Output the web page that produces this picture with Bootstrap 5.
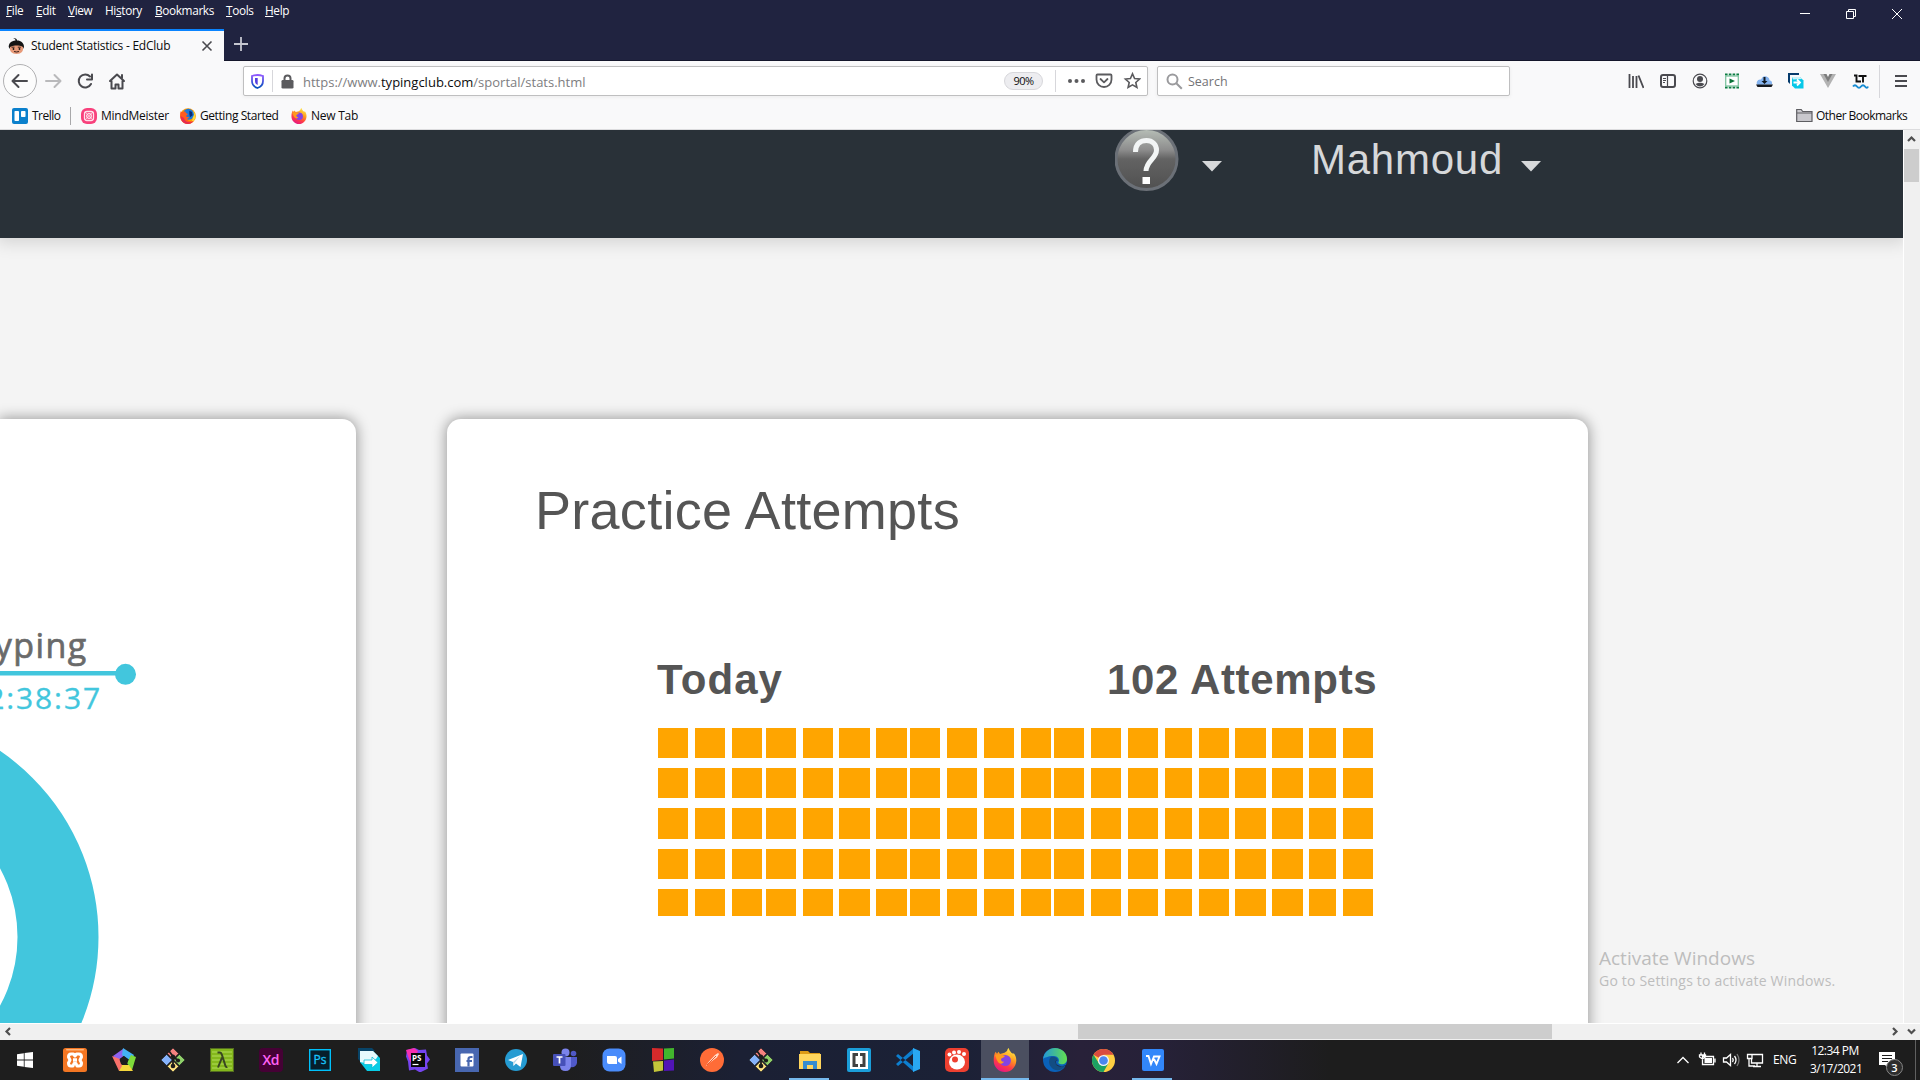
<!DOCTYPE html>
<html lang="en">
<head>
<meta charset="utf-8">
<title>Student Statistics - EdClub</title>
<link href="https://cdn.jsdelivr.net/npm/bootstrap@5.3.0/dist/css/bootstrap.min.css" rel="stylesheet">
<style>
body{width:1920px;height:1080px;overflow:hidden;font-family:"Open Sans","Noto Sans",sans-serif;font-size:12px;line-height:16px;color:#0c0c0d;background:#f9f9fa}
svg{display:block;flex:none}
.titlebar{height:61px;background:#202340}
.menus{height:19px;padding-left:6px;color:#fff}
.menus span{letter-spacing:-.35px;font-size:11.8px;white-space:nowrap}
.menus span::first-letter{text-decoration:underline}
.menus .hist::first-letter{text-decoration:none}
.menus .m1{width:30px}.menus .m2{width:32px}.menus .m3{width:37px}.menus .m4{width:50px}.menus .m5{width:71px}.menus .m6{width:39px}
.tabitem{width:224px;height:32px;background:#f9f9fa;border-top:2px solid #0a84ff;padding-left:8px}
.tabtitle{letter-spacing:-.24px;margin-left:6px;width:170px;white-space:nowrap}
.tabs-rest{border-bottom:1px solid #14162b;height:32px}
.toolbar{height:41px;background:#f9f9fa;padding-bottom:1px}
.navslot{width:32px;display:flex;justify-content:center}
.field{height:30px;background:#fff;border:1px solid #bfbfc0;border-radius:2px;box-shadow:0 1px 4px rgba(0,0,0,.06)}
.urlfield{width:905px;margin-left:110px}
.urltext{font-size:13px;color:#7d7d80;letter-spacing:0;margin-left:9px;padding-top:2px}
.urltext b{font-weight:400;color:#0c0c0d}
.searchtext{font-size:12.5px;color:#737376;margin-left:5px;padding-top:2px}
.zoomlevel{width:39px;height:18px;border:1px solid #d7d7db;border-radius:9px;background:#ededf0;font-size:11px;line-height:16px;text-align:center;letter-spacing:-.5px}
.searchfield{width:353px;margin-left:9px}
.vline{width:1px;background:#d7d7db}
.bookmarks{height:28px;background:#f9f9fa;border-bottom:1px solid #dcdcde;letter-spacing:-.25px;white-space:nowrap}
.bookmarks svg{margin-right:4px}
.viewport{height:910px;background:#f4f4f4}
.webpage{width:1903px;height:893px;overflow:hidden;font-family:"Liberation Sans",Arial,sans-serif;background:#f4f4f4}
.sitebar{height:108px;background:#293138;box-shadow:0 2px 16px 3px rgba(0,0,0,.13);color:#d6d8da}
.username{font-size:42px;line-height:60px;letter-spacing:.75px;width:189px}
.panels{padding-top:181px;gap:91px}
.panelbox{background:#fff;height:700px;box-shadow:0 0 14px 1px rgba(0,0,0,.38)}
.panelleft{width:356px;border-radius:0 14px 0 0}
.panelright{width:1141px;border-radius:14px 14px 0 0;padding:61px 210px 0 88px;color:#555}
.panelright h2{font-size:54px;line-height:60px;font-weight:400;margin:0;white-space:nowrap;letter-spacing:.28px}
.dayhead{margin:116px 0 0 122px;width:719px;height:48px;font-size:42px;line-height:48px;font-weight:700;overflow:hidden;white-space:nowrap}
.dayhead .total{width:269px;letter-spacing:.68px}
.grid-attempts{display:grid;margin:24px 0 0 123px;width:720px;grid-template-columns:37px 37px 34px 37px 36px 37px 34px 37px 37px 37px 33px 37px 37px 37px 34px 36px 37px 37px 34px 30px;grid-template-rows:40px 40px 41px 40px 27px}
.grid-attempts i{background:orange;width:30px;height:30px}
.grid-attempts i:nth-child(20n+6),.grid-attempts i:nth-child(20n+7),.grid-attempts i:nth-child(20n+17),.grid-attempts i:nth-child(20n+18){width:31px}
.grid-attempts i:nth-child(20n+15),.grid-attempts i:nth-child(20n+19){width:27px}
.grid-attempts i:nth-child(n+41):nth-child(-n+60){height:31px}
.grid-attempts i:nth-child(n+81){height:27px}
.vscroll{width:17px;height:893px;background:#f0f0f0;border-left:1px solid #fff}
.hscroll{height:17px;background:#f0f0f0;border-top:1px solid #fff}
.thumb{background:#cdcdcd}
.watermark{left:1599px;top:946px;color:#bdbdbd;white-space:nowrap}
.watermark .w1{font-size:19px;line-height:24px}
.watermark .w2{font-size:14px;line-height:21px;letter-spacing:.2px}
.taskbar{height:40px;padding-left:1px;background:linear-gradient(90deg,#1e1e1e 0,#1e1e1e 560px,#1b2034 740px,#1b2136 960px,#282139 1080px,#262138 1160px,#1d1d1d 1330px);color:#fff}
.app{width:49px;height:40px;display:flex;align-items:center;justify-content:center;position:relative}
.app.start{padding-right:2px}
.app.open::after{content:"";position:absolute;left:4px;right:5px;bottom:0;height:2px;background:#76b9ed}
.app.active{background:linear-gradient(#4b4f60,#4b4f60) 0 0/48px 100% no-repeat}
.app.active::after{left:0;right:1px}
svg text{font-family:"Open Sans","Noto Sans",sans-serif}
</style>
<script src="https://cdn.jsdelivr.net/npm/bootstrap@5.3.0/dist/js/bootstrap.bundle.min.js"></script>
</head>
<body>
<svg width="0" height="0" class="position-absolute"><defs>
<linearGradient id="ffo" x1="0.8" y1="0" x2="0.3" y2="1"><stop offset="0" stop-color="#fff44f"/><stop offset=".4" stop-color="#ff9a1f"/><stop offset=".7" stop-color="#ff3b47"/><stop offset="1" stop-color="#e31587"/></linearGradient>
<linearGradient id="helpg" x1="0" y1="0" x2="0" y2="1"><stop offset="0" stop-color="#b8c0b8"/><stop offset=".35" stop-color="#8d8d8d"/><stop offset=".5" stop-color="#636363"/><stop offset="1" stop-color="#505050"/></linearGradient>
<linearGradient id="shg" x1="0" y1="0" x2="0" y2="1"><stop offset="0" stop-color="#9059ff"/><stop offset="1" stop-color="#0250bb"/></linearGradient>
<linearGradient id="edg" x1="0" y1="0" x2="1" y2="0"><stop offset="0" stop-color="#2297d8"/><stop offset="1" stop-color="#63e04e"/></linearGradient>
<symbol id="git" viewBox="0 0 24 24"><g stroke="#1c1c1c" stroke-width=".6"><path d="M12 0l5.600 5.600L12 11.200 6.400 5.600z" fill="#f5827f"/><path d="M18.400 6.400L24 12l-5.600 5.600L12.800 12z" fill="#8fd06a"/><path d="M5.600 6.400L11.200 12l-5.600 5.600L0 12z" fill="#86b3fb"/><path d="M12 12.800l5.600 5.600L12 24l-5.600-5.600z" fill="#fbe07f"/></g><g stroke="#1c1c1c" stroke-width="1.800" fill="none"><path d="M8 3l4 5.500V18M12 8.500l5 4"/></g><g fill="#1c1c1c"><circle cx="12" cy="8.500" r="2.100"/><circle cx="17" cy="12.500" r="2.100"/><circle cx="12" cy="18" r="2.300"/></g></symbol>
<symbol id="fox" viewBox="0 0 24 24"><path d="M14 3c.3-1.500 1-2.600 1.800-3 .3 2.300 1.500 3.300 2.800 4.900 1 .4 1.800.7 2.400.5 1.500 2 2.400 4.500 2.300 7.300C23 19 18.200 24 12 24S.7 19 .7 12.700C.7 9.500 1 6 2.700 3.800L4 5.800l1.500-2L7 6l4.500-1.200z" fill="url(#ffo)"/><circle cx="12.300" cy="12.500" r="5.600" fill="#8443e4"/><path d="M2 7c3-1 6 0 10 1-1 2-3 1.500-4 3 0 2 1 3 3 2.500-1 2.500-4 3-6 .5C3.500 12 3 9 2 7z" fill="#ff9a1e"/><path d="M12 6.500c3.500-.5 6 2 6.500 5 .5-5-3-7-6.500-5z" fill="#ffbd2f"/></symbol>
<symbol id="oldfox" viewBox="0 0 24 24"><circle cx="12" cy="12" r="11.800" fill="#ff9a00"/><path d="M19 4c4 3 5 9 3 13-2 5-8 7-12 6.500 6 0 9-4 9-9z" fill="#ffd83a"/><circle cx="12.500" cy="9.500" r="8.300" fill="#1b78d6"/><path d="M14 4l4 2 1 5-4 3-1-5z" fill="#0b2a72"/><path d="M1 5C-1 12 0 22 10 24c4 0 8-1 10-5-6 2-9 0-9-3l3-2c-2-1-4 0-5-2l3-3C9 8 8 7 8 5 5 6 2 7 1 5z" fill="#ff5b1c"/><path d="M1 12c0 8 5 12 11 12 3 0 6-1 8-4-6 3-13 1-14-5z" fill="#e52b50"/></symbol>
</defs></svg>

<header class="titlebar d-flex flex-column">
 <div class="d-flex justify-content-between" style="height:29px">
  <nav class="menus d-flex align-items-center"><span class="m1">File</span><span class="m2">Edit</span><span class="m3">View</span><span class="m4 hist">Hi<u>s</u>tory</span><span class="m5">Bookmarks</span><span class="m6">Tools</span><span>Help</span></nav>
  <svg width="138" height="29" viewBox="0 0 138 29" stroke="#fff" fill="none" stroke-width="1"><path d="M18 13.500h10M64.500 11.500h7v7h-7zM66.500 11v-1.500h7v7H72M110 9l10 10M120 9l-10 10"/></svg>
 </div>
 <div class="d-flex">
  <div class="tabitem d-flex align-items-center">
   <svg width="17" height="17" viewBox="0 0 17 17"><path d="M5 0c3 .3 4 1 4 2.500 4 0 7 2.500 7 6.500l-1 2H2L.7 9C1 5 3 3 7.500 2.500 7.500 1 6.500.6 5 0z" fill="#141414"/><path d="M2 9q3-2 6.500-1.500Q13 7 15 9q1 7-6.500 7Q1 16 2 9z" fill="#e79a79"/><path d="M3.500 9.200h3M9.800 9.200h3M6 13.500q2.500 1 5 0" stroke="#38201b" stroke-width="1" fill="none"/><circle cx="5.500" cy="11" r=".9" fill="#191919"/><circle cx="11.500" cy="11" r=".9" fill="#191919"/></svg>
   <span class="tabtitle">Student Statistics - EdClub</span>
   <svg width="12" height="12" viewBox="0 0 12 12" stroke="#4a4a4f" stroke-width="1.600"><path d="M1.500 1.500l9 9M10.500 1.500l-9 9"/></svg>
  </div>
  <div class="tabs-rest flex-grow-1 d-flex align-items-center"><svg class="ms-2" width="17" height="17" viewBox="0 0 17 17" stroke="#c5c6d0" stroke-width="1.800"><path d="M9 1v14M2 8h14"/></svg></div>
 </div>
</header>

<div class="toolbar d-flex align-items-center">
 <svg width="133" height="40" viewBox="0 0 133 40" fill="none" stroke="#4a4a4f" stroke-width="2" stroke-linecap="round" stroke-linejoin="round"><circle cx="20" cy="20" r="16.500" fill="#fcfcfc" stroke="#b1b1b3" stroke-width="1"/><path d="M27 20H13M18.500 14L12.500 20l6 6"/><path d="M46 20h14M54.500 14l6 6-6 6" stroke="#b9b9bb"/><path d="M90 15.500A6.500 6.500 0 1 0 91 23M92 13.500v5h-5"/><path d="M110 20l7-6.500 7 6.500M111.500 20v7.500h4v-4h3v4h4V20M122 14v3"/></svg>
 <div class="field urlfield d-flex align-items-center">
  <svg style="margin-left:7px" width="13" height="15" viewBox="0 0 13 15"><path d="M6.500 1C9 1 10.500 1.500 12 2v5c0 4-2.500 6-5.500 7C3.500 13 1 11 1 7V2c1.500-.5 3-1 5.500-1z" fill="#fff" stroke="url(#shg)" stroke-width="1.800"/><path d="M6.700 4H4v3c0 2 .8 3.300 2.700 4z" fill="#5540df"/></svg>
  <span class="vline" style="height:22px;margin-left:8px"></span>
  <svg style="margin-left:8px" width="13" height="15" viewBox="0 0 13 15"><path d="M3.500 7V4.500a3 3 0 0 1 6 0V7" fill="none" stroke="#5b5b5e" stroke-width="2"/><rect x=".5" y="6" width="12" height="8.500" rx="1.300" fill="#5b5b5e"/></svg>
  <span class="urltext">https://www.<b>typingclub.com</b>/sportal/stats.html</span>
  <span class="zoomlevel ms-auto">90%</span>
  <span class="vline" style="height:22px;margin-left:12px"></span>
  <svg style="margin-left:12px;margin-right:6px" width="73" height="18" viewBox="0 0 73 18" fill="none" stroke="#5b5b5e" stroke-width="1.800"><g fill="#5b5b5e" stroke="none"><circle cx="2" cy="9" r="2"/><circle cx="8.500" cy="9" r="2"/><circle cx="15" cy="9" r="2"/></g><path d="M29.500 2.500h13q1 0 1 1v4a7.500 7.500 0 0 1-15 0v-4q0-1 1-1zM32.500 7l3.500 3.300L39.500 7" stroke-linejoin="round" stroke-linecap="round"/><path d="M64.500 1.800l2.100 4.700 5 .5-3.800 3.500 1.100 5-4.400-2.600-4.400 2.600 1.100-5L57.400 7l5-.5z" stroke-width="1.600"/></svg>
 </div>
 <div class="field searchfield d-flex align-items-center">
  <svg style="margin-left:8px" width="17" height="17" viewBox="0 0 17 17" fill="none" stroke="#9a9a9d" stroke-width="2"><circle cx="6.500" cy="6.500" r="5"/><path d="M10.300 10.300l5.500 5.500"/></svg>
  <span class="searchtext">Search</span>
 </div>
 <div class="d-flex align-items-center ms-auto">
  <span class="navslot"><svg width="16" height="16" viewBox="0 0 16 16" stroke="#4a4a4f" stroke-width="1.800"><path d="M1.500 1v14M5 3v12M8.500 3v12M10.500 2.500l5 12.500"/></svg></span>
  <span class="navslot"><svg width="16" height="16" viewBox="0 0 16 16" fill="none" stroke="#4a4a4f"><rect x="1" y="2" width="14" height="12" rx="2" stroke-width="2"/><path d="M7.500 2v12" stroke-width="1.200"/><path d="M3 5.500h3M3 7.500h3M3 9.500h2"/></svg></span>
  <span class="navslot"><svg width="16" height="16" viewBox="0 0 16 16"><circle cx="8" cy="8" r="6.800" fill="none" stroke="#4a4a4f" stroke-width="1.200"/><circle cx="8" cy="6" r="3" fill="#4a4a4f"/><path d="M3.500 11Q8 8.500 12.500 11 8 16 3.500 11z" fill="#4a4a4f"/></svg></span>
  <span class="navslot"><svg width="16" height="16" viewBox="0 0 16 16"><path d="M1 1.500h14M1 14.500h14" stroke="#0d7d42" stroke-width="2.200" stroke-dasharray="2.600 1.200"/><rect x="1.700" y="3" width="12.600" height="10" fill="#fff" stroke="#7fc4a0" stroke-width="1.300"/><path d="M5.500 5.500L11 8l-5.500 2.500z" fill="#0b7238"/></svg></span>
  <span class="navslot"><svg width="17" height="14" viewBox="0 0 17 14"><path d="M2 11Q0 10 1 7.500t4-2q2-4.500 5.500-3 3 1 3 4 3 0 2.500 4z" fill="#85b4f0"/><path d="M0 10.500h17L15.500 13h-14z" fill="#15191f"/><path d="M8.500 3v5" stroke="#101820" stroke-width="2"/><path d="M5.500 7h6l-3 3z" fill="#101820"/></svg></span>
  <span class="navslot"><svg width="16" height="16" viewBox="0 0 16 16"><path d="M0 0h11v2H2v9L0 9z" fill="#063b6c"/><path d="M4 4h8l3.500 3.500v8H7L4 12.500z" fill="#08c8e8"/><path d="M4 4h8l2 2-9 .5z" fill="#c9f3fa"/><path d="M5.500 9.500H12M9 6.500l3 3-3 3" fill="none" stroke="#fff" stroke-width="1.800"/></svg></span>
  <span class="navslot"><svg width="16" height="16" viewBox="0 0 16 16"><path d="M0 1h4l4 7 4-7h4L8 15z" fill="#b3b3b3"/><path d="M3.500 1h3L8 4l1.500-3h3L8 9z" fill="#7d7d7d"/></svg></span>
  <span class="navslot"><svg width="17" height="16" viewBox="0 0 17 16"><path d="M2 2.500h2.500v6H9M6.500 3h8M11 3v6.500" fill="none" stroke="#111" stroke-width="1.900"/><path d="M1 13.500q2-2.500 4 0t4 0 4 0 3 0" fill="none" stroke="#168bd2" stroke-width="2"/></svg></span>
  <span class="vline" style="height:33px;margin-left:3px"></span>
  <svg style="margin:0 13px 0 15px" width="12" height="14" viewBox="0 0 12 14" stroke="#4a4a4f" stroke-width="2"><path d="M0 2h12M0 7h12M0 12h12"/></svg>
 </div>
</div>

<div class="bookmarks d-flex align-items-center">
 <svg style="margin-left:12px" width="16" height="16" viewBox="0 0 16 16"><rect width="16" height="16" rx="2" fill="#0b80cc"/><rect x="2.500" y="3" width="4.500" height="10" rx=".8" fill="#fff"/><rect x="9" y="3" width="4.500" height="6" rx=".8" fill="#fff"/></svg><span style="width:38px;letter-spacing:-.5px">Trello</span>
 <span class="vline" style="height:18px;background:#a8a8aa"></span>
 <svg style="margin-left:10px" width="16" height="16" viewBox="0 0 16 16"><rect width="16" height="16" rx="6" fill="#f8417c"/><g fill="none" stroke="#ffe3ec" stroke-width="1.300"><rect x="3.500" y="3.500" width="9" height="9" rx="2.500"/><circle cx="8" cy="8" r="2.300"/><path d="M4 4l8 8M12 4l-8 8" stroke-width=".7"/></g></svg><span style="width:79px">MindMeister</span>
 <svg width="16" height="16"><use href="#oldfox"/></svg><span style="width:91px;letter-spacing:-.42px">Getting Started</span>
 <svg width="16" height="16"><use href="#fox"/></svg><span>New Tab</span>
 <span class="ms-auto d-flex align-items-center" style="width:124px;letter-spacing:-.52px"><svg width="17" height="15" viewBox="0 0 17 15" style="margin-right:3px"><path d="M.7 13.500v-12h4.500l1.500 2H16v10z" fill="#c9c8cd" stroke="#5e5e62" stroke-width="1.200"/><path d="M1 5h15" stroke="#5e5e62"/></svg><span>Other Bookmarks</span></span>
</div>

<div class="viewport">
 <div class="d-flex">
  <main class="webpage">
   <div class="sitebar d-flex">
    <svg style="margin-left:1115px" width="64" height="62" viewBox="0 0 64 62"><circle cx="31.500" cy="29" r="30.500" fill="url(#helpg)" stroke="#6b7077" stroke-width="3"/><path d="M20.500 22C20.500 13 26 10.500 31.500 10.500c6 0 10 4 10 9.500 0 9-10 10-10.500 21" fill="none" stroke="#f2f5f5" stroke-width="5"/><rect x="27.500" y="47" width="7.500" height="7" fill="#fff"/></svg>
    <svg style="margin:31px 89px 0 23px" width="20" height="11"><path d="M0 0h20L10 10.500z" fill="#d6d8da"/></svg>
    <span class="username">Mahmoud</span>
    <svg style="margin:31px 0 0 21px" width="20" height="11"><path d="M0 0h20L10 10.500z" fill="#d6d8da"/></svg>
   </div>
   <div class="panels d-flex">
    <section class="panelbox panelleft">
     <svg width="356" height="605" viewBox="0 419 356 605"><text x="87.500" y="658" text-anchor="end" font-size="34" letter-spacing="1.400" fill="#6a6a6a" stroke="#6a6a6a" stroke-width=".7">Typing</text><path d="M0 673.300h125" stroke="#42c6dd" stroke-width="4.500"/><circle cx="125.500" cy="674.300" r="10.500" fill="#42c6dd"/><text x="102" y="709" text-anchor="end" font-size="30" letter-spacing="1.900" fill="#42c6dd" stroke="#42c6dd" stroke-width=".3">02:38:37</text><circle cx="-126.500" cy="937" r="184.500" fill="none" stroke="#42c6dd" stroke-width="81"/></svg>
    </section>
    <section class="panelbox panelright">
     <h2>Practice Attempts</h2>
     <div class="dayhead d-flex justify-content-between"><span style="letter-spacing:1.1px">Today</span><span class="total">102 Attempts</span></div>
     <div class="grid-attempts" id="attempts"></div>
    </section>
   </div>
  </main>
  <div class="vscroll d-flex flex-column">
   <svg width="15" height="19" viewBox="0 0 15 19" fill="none" stroke="#4f4f4f" stroke-width="2.200"><path d="M4 11L7.500 7.500 11 11"/></svg>
   <div class="thumb" style="width:15px;height:33px"></div>
  </div>
 </div>
 <div class="hscroll d-flex align-items-start">
  <svg width="1078" height="15" viewBox="0 0 1078 15" fill="none" stroke="#4f4f4f" stroke-width="2.200"><path d="M10 4L6.500 7.500 10 11"/></svg>
  <div class="thumb" style="width:474px;height:15px"></div>
  <svg class="ms-auto" width="40" height="15" viewBox="0 0 40 15" fill="none" stroke="#4f4f4f" stroke-width="2.200"><path d="M13 4l3.500 3.500L13 11M28 5.500L31.500 9 35 5.500"/></svg>
 </div>
</div>

<footer class="taskbar d-flex align-items-center">
 <span class="app start"><svg width="16" height="16" viewBox="0 0 16 16" fill="#fff"><path d="M0 2.200L6.800 1.200v6.400H0zM7.600 1.100L16 0v7.600H7.600zM0 8.400h6.800v6.400L0 13.800zM7.600 8.400H16V16l-8.400-1.100z"/></svg></span>
 <span class="app"><svg width="24" height="24" viewBox="0 0 24 24"><rect width="24" height="24" rx="2.500" fill="#f37623"/><rect x="3" y="1" width="18" height="1.500" rx=".7" fill="#ffb77d"/><path d="M8 6h2.500l1.500 2 1.500-2H16q2.500 0 2.500 3l-1.500 3 1.500 3q0 3-2.500 3h-2l-1-2.500h-2L10 18H8q-2.500 0-2.500-3L7 12 5.500 9q0-3 2.500-3z" fill="none" stroke="#fff" stroke-width="3" stroke-linejoin="round"/><path d="M10 12h4" stroke="#fff" stroke-width="3.500"/></svg></span>
 <span class="app"><svg width="24" height="24" viewBox="0 0 24 24"><path d="M11 1L1 8l4 5 8-6z" fill="#8e62ef"/><path d="M11 0l11 7-3 6-9-6z" fill="#43b2f5"/><path d="M24 9l-4 13-5-7 4-8z" fill="#7edb3a"/><path d="M21 23H7l1-6h9z" fill="#f5d83c"/><path d="M7 23L0 8l8 3 2 7z" fill="#f9716b"/><path d="M12 8l4.500 3.500L15 16H9l-1.500-4.500z" fill="#1d1d1d"/></svg></span>
 <span class="app"><svg width="24" height="24"><use href="#git"/></svg></span>
 <span class="app"><svg width="24" height="24" viewBox="0 0 24 24"><rect x=".5" y=".5" width="23" height="23" fill="#84b81c" stroke="#536d20"/><path d="M2 4h20M2 8h20M2 12h20M2 16h20M2 20h20" stroke="#a2cf45" stroke-width="1.500"/><path d="M7.500 4.500h2.500c1 0 1.500 1 2 2.500l3.500 11q.5 1.500 1.800.8M12 9.500L8 19.500" fill="none" stroke="#394622" stroke-width="2"/></svg></span>
 <span class="app"><svg width="24" height="24" viewBox="0 0 24 24"><rect width="24" height="24" rx="4" fill="#450135"/><text x="12" y="17" font-size="14" font-weight="600" text-anchor="middle" fill="#ff61f6" textLength="17">Xd</text></svg></span>
 <span class="app"><svg width="22" height="22" viewBox="0 0 22 22"><rect x=".7" y=".7" width="20.600" height="20.600" fill="#061e2b" stroke="#00c0fb" stroke-width="1.400"/><text x="11" y="15" font-size="12" text-anchor="middle" fill="#19c4fa" stroke="#19c4fa" stroke-width=".3">Ps</text></svg></span>
 <span class="app"><svg width="22" height="24" viewBox="0 0 22 24"><path d="M0 0h14l3 3H4v12l-4-4z" fill="#084468"/><path d="M2 3h13l7 7v13H9l-7-9z" fill="#08cde6"/><path d="M2 3h13l5 5-2 3-6 4H7l-5-1z" fill="#e6fafd"/><path d="M6 12h8V9l6 5.500-6 5.500v-3.500H6z" fill="#fff" stroke="#08bdd6" stroke-width=".8"/></svg></span>
 <span class="app"><svg width="24" height="24" viewBox="0 0 24 24"><path d="M1 2l8-2 4 2 7-.5 1 6 3 4-3 4 1 5-8 4-5-3-6 1-1-9-2-5z" fill="#7644ef"/><path d="M0 2l8-2 4 3-6 14-3-6z" fill="#f72fb0"/><rect x="5" y="5" width="14" height="14" fill="#080808"/><text x="6" y="12.500" font-size="8" font-weight="700" fill="#fff">PS</text><path d="M6.500 16.500h6" stroke="#fff" stroke-width="1.200"/></svg></span>
 <span class="app"><svg width="24" height="24" viewBox="0 0 24 24"><rect width="24" height="24" fill="#4867b0"/><rect x="5.500" y="5.500" width="13" height="13" rx="1" fill="#fff"/><path d="M13.500 18.500V11q0-2 2.500-2h1.500M11.500 13h5.500" fill="none" stroke="#4867b0" stroke-width="2.200"/></svg></span>
 <span class="app"><svg width="24" height="24" viewBox="0 0 24 24"><circle cx="12" cy="12" r="11" fill="#259bd2"/><path d="M4 12L19 6l-2.500 13-4.500-3.500-2.500 2.500-.5-4z" fill="#fff"/><path d="M9 14l7-6-5.500 7-1 3z" fill="#b7d8ea"/></svg></span>
 <span class="app"><svg width="24" height="24" viewBox="0 0 24 24"><circle cx="12.500" cy="4.500" r="4" fill="#7b83eb"/><circle cx="20.500" cy="5.500" r="2.800" fill="#4f58c5"/><path d="M16 9h8v6q-1 5-7 4z" fill="#5059c9"/><path d="M8 9h10v8q0 6-5.500 6T7 18z" fill="#7b83eb"/><rect y="6" width="12.500" height="12" rx="1" fill="#4650b8"/><path d="M3.500 9h6M6.500 9v6.500" stroke="#fff" stroke-width="1.700"/></svg></span>
 <span class="app"><svg width="24" height="24" viewBox="0 0 24 24"><rect x=".5" y=".5" width="23" height="23" rx="7" fill="#4a8cfb"/><path d="M5 8h8q2 0 2 2v6H7q-2 0-2-2zM16 11l3.500-2.500v7.500L16 13.500z" fill="#fff"/></svg></span>
 <span class="app"><svg width="24" height="24" viewBox="0 0 24 24"><path d="M1 0l11 .5V12L1 13z" fill="#d72a2b"/><path d="M13 .5L23 0v10.500l-10 1z" fill="#42b52d"/><path d="M2 13.500l10-.5v9.500L3 24z" fill="#c4c63a"/><path d="M13 12.500l10-1v11l-10 .5z" fill="#5115b6"/></svg></span>
 <span class="app"><svg width="24" height="24" viewBox="0 0 24 24"><circle cx="12" cy="12" r="12" fill="#ff6c37"/><path d="M5.500 18.500l3.500-5 6-6.500 3-2 1 1-2 3.500-7 5z" fill="#ffddcc"/><path d="M7 17l9-9" stroke="#ee5b2b"/></svg></span>
 <span class="app"><svg width="24" height="24"><use href="#git"/></svg></span>
 <span class="app open"><svg width="22" height="18" viewBox="0 0 22 18"><path d="M1 0h8l2 2h10v3H1z" fill="#dd9b16"/><rect y="3" width="22" height="15" fill="#ffd65d"/><path d="M4 18v-8h14v8h-4v-4H8v4z" fill="#378dce"/></svg></span>
 <span class="app"><svg width="24" height="24" viewBox="0 0 24 24"><rect width="24" height="24" rx="2" fill="#1b9ed9"/><rect x="3" y="3" width="18" height="18" fill="#fff"/><path d="M11 6.500H7v11h4M13 6.500h4v11h-4" fill="none" stroke="#414141" stroke-width="3"/></svg></span>
 <span class="app"><svg width="24" height="24" viewBox="0 0 24 24"><path d="M0 8l2-2 16 13v5zM0 16l2 2L18 5V0z" fill="#0d7fd0"/><path d="M17 0l7 3v18l-7 3z" fill="#29a8f3"/></svg></span>
 <span class="app"><svg width="24" height="24" viewBox="0 0 24 24"><rect width="24" height="24" rx="5" fill="#ee4030"/><ellipse cx="12" cy="14" rx="8" ry="7.500" fill="#fff"/><circle cx="10" cy="11.500" r="3" fill="#ee4030"/><g fill="#fff"><circle cx="4.500" cy="6.500" r="2"/><circle cx="9" cy="4.500" r="2"/><circle cx="14" cy="4" r="2"/><circle cx="19" cy="6" r="2"/></g></svg></span>
 <span class="app open active"><svg width="24" height="24" style="margin-right:1px"><use href="#fox"/></svg></span>
 <span class="app"><svg width="24" height="24" viewBox="0 0 24 24"><circle cx="12" cy="12" r="12" fill="#0a61b9"/><path d="M0 11C1 4 6 0 12 0c7 0 12 5 12 11 0 4-3 6-7 5-2-.5-2-1.500-1-3 0-4-3-5-6-5-5 0-9 2-10 3z" fill="url(#edg)"/><path d="M8 9c4-1 7 1 7 4-4-2-2 7 7 5-3 5-10 6-14 1-3-4-2-8 0-10z" fill="#134d83"/><path d="M14 12q-3 3 0 5.500 3 2 9.500-.5V18q-1 1-1.500 0-7 1-9.500-2.500-1-2 1.500-3.500z" fill="#20213a"/></svg></span>
 <span class="app"><svg width="23" height="23" viewBox="0 0 24 24"><circle cx="12" cy="12" r="12" fill="#ffcf42"/><path d="M12 12L1.600 6A12 12 0 0 1 22.400 6H12z" fill="#d94c3e"/><path d="M1.600 6A12 12 0 0 0 12 24l5-9-5-1-5 .5z" fill="#1ca263"/><circle cx="12" cy="12" r="5.800" fill="#f5f5f5"/><circle cx="12" cy="12" r="4.500" fill="#4b87ef"/></svg></span>
 <span class="app open"><svg width="22" height="22" viewBox="0 0 22 22"><rect width="22" height="22" rx="2" fill="#3287fa"/><path d="M4 7h2.500l2.500 8 3-7.500h5.500L14.500 15 12 10" fill="none" stroke="#fff" stroke-width="1.900"/></svg></span>
 <div class="d-flex align-items-center ms-auto">
  <svg width="90" height="40" viewBox="1675 1040 90 40" fill="none" stroke="#fff" stroke-width="1.300"><path d="M1677.500 1063l5.500-5.500 5.500 5.500"/><path d="M1702.500 1056.500h11v8h-11zM1715 1058.500v4M1699.500 1055h6v2l-3 2-3-2zM1701 1052.500v2.500M1704.500 1052.500v2.500M1702.500 1059v3"/><rect x="1704.500" y="1058" width="7.500" height="5" fill="#fff" stroke="none"/><path d="M1723.500 1058h3l4-3.500v11l-4-3.500h-3zM1732.500 1058q1.500 2 0 4M1734.500 1056q3 4 0 8"/><path d="M1737 1054q4 6 0 12" stroke="#777"/><path d="M1752 1054.500h10.500v8.500h-11v-4M1747.500 1054.500h4.500v4h-4.500zM1749 1059v7h6M1757 1063v3.500M1753 1066.500h8"/></svg>
  <span style="margin-left:8px;width:37px;letter-spacing:-.4px">ENG</span>
  <span class="text-center text-nowrap" style="width:50px;line-height:18px;letter-spacing:-.5px">12:34 PM<br>3/17/2021</span>
  <svg style="margin-left:19px" width="27" height="40" viewBox="0 0 27 40"><path d="M0 12h16v13H9v3l-3-3H0z" fill="#fff"/><path d="M3 15.500h10M3 18.500h10M3 21.500h6" stroke="#1d1d1d"/><circle cx="15.500" cy="27.500" r="8" fill="#2d2d2d" stroke="#868686"/><text x="15.500" y="31.500" font-size="11" font-weight="600" text-anchor="middle" fill="#fff">3</text></svg>
  <span class="vline" style="height:40px;margin:0 4px 0 9px;background:#606060"></span>
 </div>
</footer>
<div class="watermark position-absolute"><div class="w1">Activate Windows</div><div class="w2">Go to Settings to activate Windows.</div></div>
<script>
// one square per practice attempt, twenty to a row
const attempts = document.getElementById('attempts');
for (let n = 0; n < 100; n++) attempts.appendChild(document.createElement('i'));
</script>
</body>
</html>
